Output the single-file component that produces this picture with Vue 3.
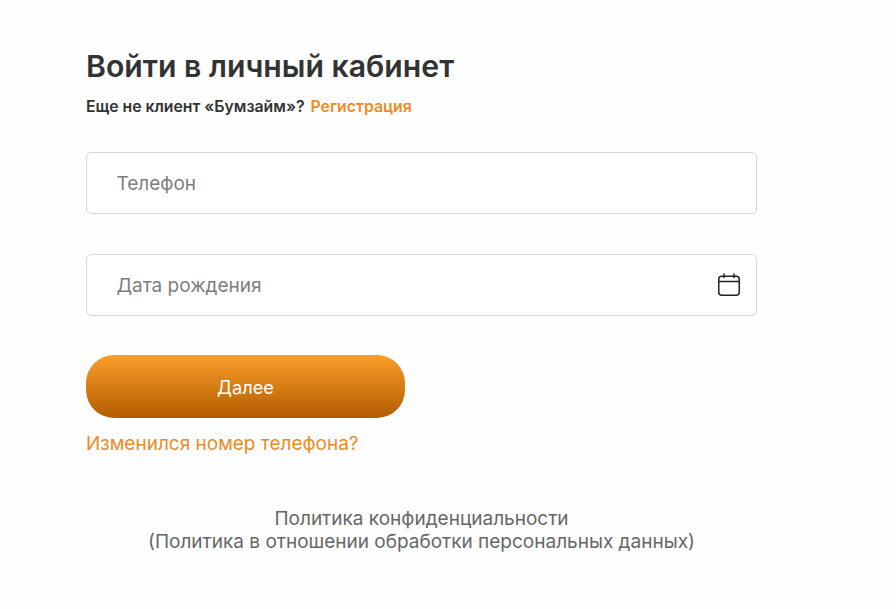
<template>
  <div class="page">
    <form class="login" @submit.prevent>
      <h1 class="title">Войти в личный кабинет</h1>
      <p class="subtitle">
        Еще не клиент «Бумзайм»?
        <a href="#" class="reg-link">Регистрация</a>
      </p>

      <div class="field">
        <input type="text" placeholder="Телефон">
      </div>

      <div class="field">
        <input type="text" placeholder="Дата рождения">
        <svg class="calendar" width="24" height="24" viewBox="0 0 24 24" fill="none" stroke="#222" stroke-width="1.5" stroke-linecap="round">
          <rect x="1.75" y="3.25" width="20.5" height="19" rx="3" />
          <path d="M1.75 8.5h20.5" />
          <path d="M7 1v3.5M17 1v3.5" />
        </svg>
      </div>

      <button type="submit" class="btn-next">Далее</button>
      <a href="#" class="change-link">Изменился номер телефона?</a>
    </form>

    <div class="policy">
      <a href="#">Политика конфиденциальности</a>
      <a href="#">(Политика в отношении обработки персональных данных)</a>
    </div>
  </div>
</template>

<script setup>
</script>

<style scoped>
.page {
  width: 896px;
  height: 609px;
  overflow: hidden;
  box-sizing: border-box;
  padding: 46px 0 0 86px;
  background: #fefefe;
  font-family: Inter, sans-serif;
}

.login {
  display: flex;
  flex-direction: column;
  align-items: flex-start;
  width: 671px;
}

.title {
  margin: 0;
  font-size: 30.2px;
  line-height: 40px;
  font-weight: 600;
  color: #333;
}

.subtitle {
  margin: 11px 0 0;
  font-size: 15.8px;
  line-height: 20px;
  font-weight: 600;
  color: #333;
}

.reg-link {
  margin-left: 2px;
  color: #f08a24;
  text-decoration: none;
}

.field {
  position: relative;
  width: 100%;
  margin-top: 35px;
}

.field + .field {
  margin-top: 40px;
}

.field input {
  display: block;
  width: 100%;
  height: 62px;
  box-sizing: border-box;
  padding: 0 30px 0 29.5px;
  border: 1px solid #d3d7de;
  border-radius: 5px;
  background: #fff;
  font-family: inherit;
  font-size: 19px;
  color: #333;
  outline: none;
}

.field input::placeholder {
  color: #7d7d7d;
  opacity: 1;
}

.calendar {
  position: absolute;
  top: 19px;
  right: 16px;
}

.btn-next {
  width: 319px;
  height: 63px;
  margin-top: 39px;
  border: none;
  border-radius: 28px;
  background: linear-gradient(180deg, #fa9d2b 0%, #b25c00 100%);
  font-family: inherit;
  font-size: 18.2px;
  font-weight: 400;
  color: #fff;
  cursor: pointer;
}

.change-link {
  margin-top: 14px;
  font-size: 19px;
  line-height: 24px;
  color: #f08a24;
  text-decoration: none;
}

.policy {
  display: flex;
  flex-direction: column;
  align-items: center;
  width: 671px;
  margin-top: 51px;
  font-size: 19px;
  line-height: 23px;
  color: #666;
}

.policy a {
  color: inherit;
  text-decoration: none;
}
</style>
